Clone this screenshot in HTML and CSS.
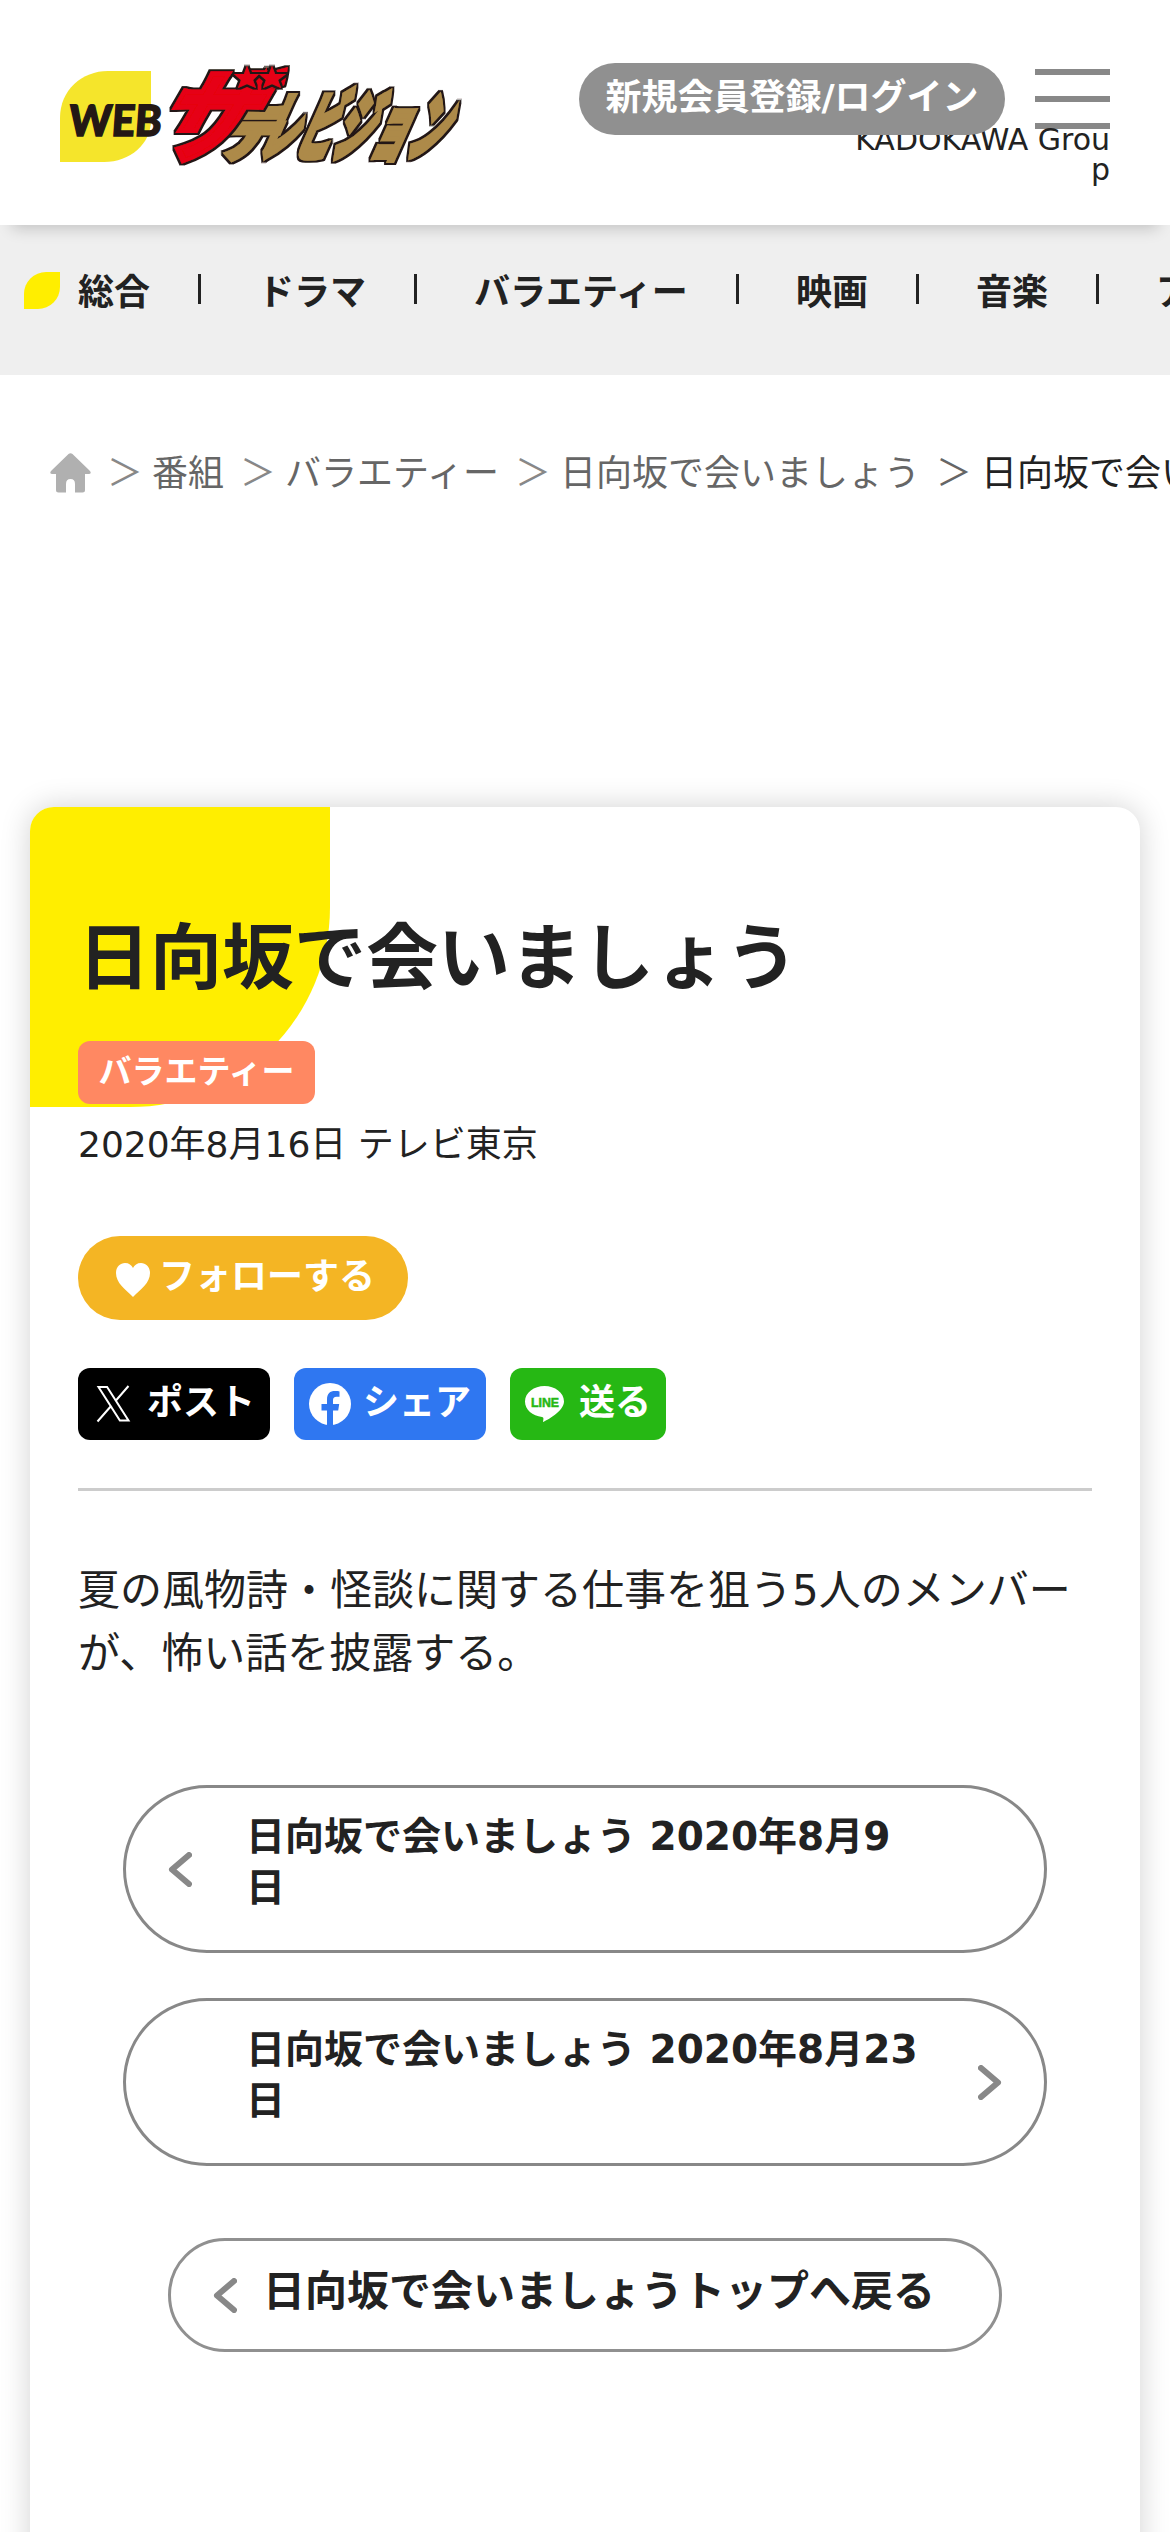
FILE: index.html
```html
<!DOCTYPE html>
<html lang="ja">
<head>
<meta charset="utf-8">
<title>日向坂で会いましょう</title>
<link rel="stylesheet" href="styles.css">
</head>
<body>
<header class="header">
  <a class="logo" href="#">
    <svg width="440" height="140" viewBox="0 0 440 140">
      <defs>
        <filter id="outline" x="-10%" y="-20%" width="120%" height="140%">
          <feMorphology in="SourceAlpha" operator="dilate" radius="2" result="fat"/>
          <feFlood flood-color="#231815"/>
          <feComposite in2="fat" operator="in"/>
          <feMerge><feMergeNode/><feMergeNode in="SourceGraphic"/></feMerge>
        </filter>
      </defs>
      <path fill="#f5e52b" d="M20 122V78C20 50 42 31 68 31H111V80C111 104 90 122 64 122Z"/>
      <text class="logo-web" transform="translate(28 96) skewX(-4)" textLength="93" lengthAdjust="spacingAndGlyphs">WEB</text>
      <g filter="url(#outline)">
        <text class="logo-te" transform="translate(175 115) skewX(-24)" textLength="58" lengthAdjust="spacingAndGlyphs">テ</text>
        <text class="logo-tv" transform="translate(216 114) skewX(-24)" textLength="185" lengthAdjust="spacingAndGlyphs">レビジョン</text>
      </g>
      <g filter="url(#outline)">
        <text class="logo-za" transform="translate(106 112) skewX(-30)" textLength="98" lengthAdjust="spacingAndGlyphs">ザ</text>
      </g>
      <g filter="url(#outline)">
        <path fill="#e60012" d="M207 26l3 8h9l-6 6 3 8-9-4-9 4 3-8-7-6h10zM232 26l3 8h11l-8 6 3 8-9-4-9 4 3-8-7-6h10z"/>
      </g>
    </svg>
  </a>
  <div class="menu" aria-label="メニュー"><i></i><i></i><i></i></div>
  <p class="group">KADOKAWA Group</p>
  <a class="login" href="#">新規会員登録/ログイン</a>
</header>

<nav class="nav">
  <span class="leaf"></span>
  <a href="#">総合</a><a href="#">ドラマ</a><a href="#">バラエティー</a><a href="#">映画</a><a href="#">音楽</a><a href="#">アニメ</a>
</nav>

<div class="crumbs">
  <svg class="home" width="41" height="40" viewBox="0 0 41 40"><path d="M18.500 1Q20.500-.6 22.500 1L40 18Q42 21 38.500 21H35V37Q35 39.500 32.500 39.500H25V31Q25 26 20.500 26T16 31V39.500H8.500Q6 39.500 6 37V21H2.500Q-1 21 1 18Z"/></svg>
  <span class="sep">＞</span><a href="#">番組</a>
  <span class="sep">＞</span><a href="#">バラエティー</a>
  <span class="sep">＞</span><a href="#">日向坂で会いましょう</a>
  <span class="sep sep-last">＞</span><span class="here">日向坂で会いましょう 2020年8月16日</span>
</div>

<main class="card">
  <h1 class="title">日向坂で会いましょう</h1>
  <span class="badge">バラエティー</span>
  <p class="date">2020年8月16日 テレビ東京</p>
  <a class="follow" href="#">
    <svg width="34" height="34" viewBox="0 0 34 34"><path d="M17 34C9 26 0 20 0 10 0 4 4 0 9 0c4 0 6.500 2 8 5 1.500-3 4-5 8-5 5 0 9 4 9 10 0 10-9 16-17 24z"/></svg>
    <span>フォローする</span>
  </a>
  <div class="share">
    <a class="btn btn-x" href="#">
      <svg width="42" height="42" viewBox="0 0 42 42"><path fill="none" stroke="#fff" stroke-width="2" d="M5.500 4h8.600l21.400 33.500h-8.600zM35.500 3L22.500 18M18.500 22.500L4.500 38.500"/></svg>ポスト</a>
    <a class="btn btn-f" href="#">
      <svg width="42" height="42" viewBox="0 0 42 42"><circle cx="21" cy="21" r="21" fill="#fff"/><path fill="#2f77f1" d="M18 42V27.500h-5.500V21H18v-4.500c0-6 3-8.500 8-8.500 2 0 3.800.2 4.500.4v5.400h-3c-2.500 0-3.500 1.200-3.500 3.500V21h6.200l-1 6.500H24V42z"/></svg>シェア</a>
    <a class="btn btn-l" href="#">
      <svg width="42" height="42" viewBox="0 0 42 42"><path fill="#fff" d="M19.500 3C9 3 0 9.500 0 18.500 0 27 7.500 32.500 17 34c2 .5 1.500 2 1 5 4-1.500 21-11 21-20.500C39 9.500 30 3 19.500 3z"/><text class="line-word" x="6" y="23.500" textLength="28" lengthAdjust="spacingAndGlyphs">LINE</text></svg>送る</a>
  </div>
  <hr class="rule">
  <p class="lead">夏の風物詩・怪談に関する仕事を狙う5人のメンバーが、怖い話を披露する。</p>
  <div class="pager">
    <a class="page" href="#"><svg class="chev chev-prev" width="24" height="35" viewBox="0 0 24 35"><path d="M21 3L4 17.500 21 32"/></svg>日向坂で会いましょう 2020年8月9日</a>
    <a class="page" href="#"><svg class="chev chev-next" width="24" height="35" viewBox="0 0 24 35"><path d="M3 3l17 14.500L3 32"/></svg>日向坂で会いましょう 2020年8月23日</a>
    <a class="top" href="#"><svg class="chev" width="24" height="35" viewBox="0 0 24 35"><path d="M21 3L4 17.500 21 32"/></svg><span>日向坂で会いましょうトップへ戻る</span></a>
  </div>
</main>
</body>
</html>
```
FILE: styles.css
```css
* { box-sizing: border-box; margin: 0; padding: 0; }
html, body { height: 2532px; overflow: hidden; }
body {
  background: #fff;
  color: #222;
  font: 36px/1 "DejaVu Sans", "Noto Sans CJK JP", sans-serif;
}
a { color: inherit; text-decoration: none; }
svg { display: block; flex: none; }

.header {
  position: relative;
  z-index: 1;
  height: 225px;
  padding: 40px 60px 0 40px;
  background: #fff;
  box-shadow: 0 15px 15px -12px rgba(0, 0, 0, .2);
}
.logo { display: block; width: 440px; }
.logo-web { font: 900 43px "Lato", sans-serif; fill: #231815; stroke: #231815; stroke-width: 1.5px; }
.logo-tv, .logo-te { font: 900 76px "Noto Sans CJK JP", sans-serif; fill: #ad8a4a; stroke: #ad8a4a; stroke-width: 5px; }
.logo-te { font-size: 60px; }
.logo-za { font: 900 100px "Noto Sans CJK JP", sans-serif; fill: #e60012; stroke: #e60012; stroke-width: 5px; }

/* The menu button, group name and login pill overlap each other in the corner. */
.menu {
  position: absolute;
  top: 69px;
  right: 60px;
  width: 75px;
  display: flex;
  flex-direction: column;
  gap: 21px;
}
.menu i { height: 6px; background: #888; }
.group {
  position: absolute;
  top: 125px;
  right: 60px;
  width: 256px;
  font-size: 30px;
  line-height: 30px;
  text-align: right;
  word-break: break-all;
}
.login {
  position: absolute;
  top: 63px;
  right: 165px;
  width: 426px;
  height: 72px;
  padding-top: 17px;
  border-radius: 36px;
  background: #909090;
  color: #fff;
  font-weight: bold;
  text-align: center;
  white-space: nowrap;
}

.nav {
  display: flex;
  height: 150px;
  padding: 47px 0 0 24px;
  background: #efefef;
  font-weight: bold;
  white-space: nowrap;
  overflow: hidden;
}
.leaf {
  flex: none;
  width: 36px;
  height: 37px;
  margin-right: 18px;
  border-radius: 22px 0;
  background: #fe0;
}
.nav a { display: flex; flex: none; padding-top: 3px; }
.nav a + a::before {
  content: "";
  width: 3px;
  height: 30px;
  margin: -1px 57px 0 48px;
  background: #222;
}

.crumbs {
  display: flex;
  height: 432px;
  padding: 78px 0 0 50px;
  color: #666;
  line-height: 42px;
  white-space: nowrap;
  overflow: hidden;
}
.crumbs > * { flex: none; }
.home { fill: #b0b0b0; }
.sep { margin: 0 9px 0 16px; color: #888; }
.sep-last { color: #666; }
.here { color: #222; }

.card {
  position: relative;
  display: flex;
  flex-direction: column;
  align-items: flex-start;
  width: 1110px;
  height: 1850px;
  margin: 0 auto;
  padding: 106px 48px 0;
  border-radius: 24px;
  background: #fff;
  box-shadow: 0 0 30px rgba(0, 0, 0, .18);
}
.card::before {
  content: "";
  position: absolute;
  top: 0;
  left: 0;
  width: 300px;
  height: 300px;
  border-radius: 24px 0 200px 0;
  background: #fe0;
}
.card > * { position: relative; }
.title { font-size: 72px; line-height: 90px; }
.badge {
  width: 237px;
  height: 63px;
  margin-top: 38px;
  border-radius: 12px;
  background: #ff8862;
  color: #fff;
  font-size: 33px;
  font-weight: bold;
  line-height: 62px;
  text-align: center;
}
.date { margin-top: 14px; line-height: 54px; }
.follow {
  display: flex;
  align-items: center;
  gap: 9px;
  width: 330px;
  height: 84px;
  margin-top: 64px;
  padding-left: 38px;
  border-radius: 42px;
  background: #f4b524;
  color: #fff;
  font-weight: bold;
}
.follow svg { fill: #fff; margin-top: 3px; }
.follow span { margin-top: -2px; }
.share { display: flex; gap: 24px; margin-top: 48px; }
.btn {
  display: flex;
  gap: 12px;
  height: 72px;
  padding: 15px 15px 0;
  border-radius: 12px;
  color: #fff;
  font-weight: bold;
  line-height: 40px;
}
.btn-x { background: #000; }
.btn-f { background: #2f77f1; }
.btn-l { background: #26b814; }
.line-word { font: bold 12px "Liberation Sans", sans-serif; fill: #26b814; stroke: #26b814; stroke-width: .5px; }
.rule { width: 100%; height: 3px; margin-top: 48px; border: 0; background: #ccc; }
.lead { margin-top: 68px; font-size: 42px; line-height: 63px; }

.pager {
  display: flex;
  flex-direction: column;
  align-items: center;
  gap: 45px;
  width: 100%;
  margin-top: 100px;
  font-weight: bold;
}
.page {
  position: relative;
  width: 924px;
  height: 168px;
  padding: 23px 120px 0;
  border: 3px solid #888;
  border-radius: 84px;
  font-size: 39px;
  line-height: 51px;
}
.chev { fill: none; stroke: #888; stroke-width: 6px; stroke-linecap: round; stroke-linejoin: round; }
.page .chev { position: absolute; top: 64px; }
.chev-prev { left: 42px; }
.chev-next { right: 42px; }
.top {
  display: flex;
  align-items: center;
  gap: 26px;
  width: 834px;
  height: 114px;
  margin-top: 27px;
  padding-left: 42px;
  border: 3px solid #909090;
  border-radius: 57px;
  font-size: 42px;
  line-height: 54px;
  white-space: nowrap;
}
.top span { margin-top: -7px; }
```
